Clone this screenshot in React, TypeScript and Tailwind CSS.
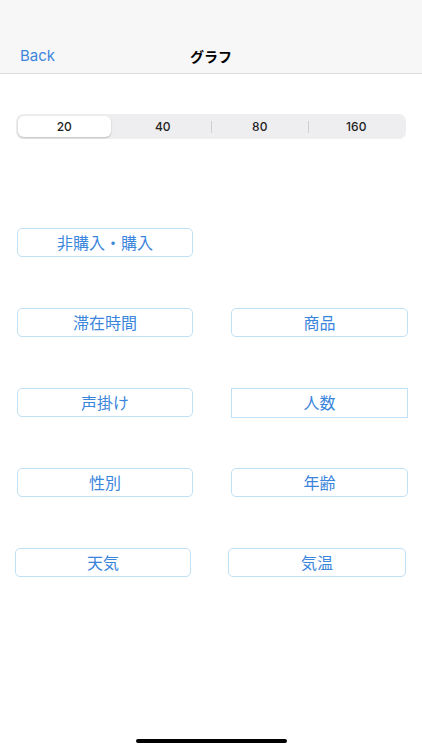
const FONT = "font-['Inter','Noto_Sans_CJK_JP',sans-serif]";

function OptionButton({
  label,
  className = "",
}: {
  label: string;
  className?: string;
}) {
  return (
    <button
      className={`h-[29px] w-[176px] border border-[#bfe0f6] bg-white text-[16px] leading-none text-[#3b86dc] ${className}`}
    >
      {label}
    </button>
  );
}

export default function App() {
  const segments = ["20", "40", "80", "160"];
  return (
    <div className={`relative h-[750px] w-[422px] overflow-hidden bg-white ${FONT}`}>
      {/* nav bar */}
      <div className="flex h-[74px] items-end border-b border-[#dcdcdc] bg-[#f7f7f7]">
        <div className="relative flex h-[38px] w-full items-start justify-center pt-[11px]">
          <span className="absolute left-[20px] top-[10px] text-[15px] text-[#3b86dc]">
            Back
          </span>
          <span className="text-[14px] font-bold text-black">グラフ</span>
        </div>
      </div>

      {/* segmented control */}
      <div className="mx-[16px] mt-[40px] flex h-[25px] items-center rounded-[7px] bg-[#eeeef0] p-[2px] text-[12px] font-medium text-[#222]">
        {segments.map((s, i) => (
          <div key={s} className="flex h-full flex-1 items-center">
            {i > 1 && <div className="h-[12px] w-px bg-[#cfcfd3]" />}
            <div
              className={`flex h-full flex-1 items-center justify-center ${
                i === 0
                  ? "mr-[4px] rounded-[6px] bg-white shadow-[0_1px_2px_rgba(0,0,0,0.2)]"
                  : ""
              }`}
            >
              {s}
            </div>
          </div>
        ))}
      </div>

      {/* buttons */}
      <div className="mt-[89px] flex flex-col gap-[51px]">
        <div className="flex pl-[17px]">
          <OptionButton label="非購入・購入" className="rounded-[5px]" />
        </div>
        <div className="flex gap-[38px] pl-[17px]">
          <OptionButton label="滞在時間" className="rounded-[5px]" />
          <OptionButton label="商品" className="w-[177px] rounded-[5px]" />
        </div>
        <div className="flex h-[29px] items-start gap-[38px] pl-[17px]">
          <OptionButton label="声掛け" className="rounded-[5px]" />
          <OptionButton label="人数" className="h-[30px] w-[177px] rounded-none" />
        </div>
        <div className="flex gap-[38px] pl-[17px]">
          <OptionButton label="性別" className="rounded-[5px]" />
          <OptionButton label="年齢" className="w-[177px] rounded-[5px]" />
        </div>
        <div className="flex gap-[37px] pl-[15px]">
          <OptionButton label="天気" className="rounded-[5px]" />
          <OptionButton label="気温" className="w-[178px] rounded-[5px]" />
        </div>
      </div>

      {/* home indicator */}
      <div className="absolute bottom-[7px] left-[136px] h-[4px] w-[151px] rounded-full bg-black" />
    </div>
  );
}
